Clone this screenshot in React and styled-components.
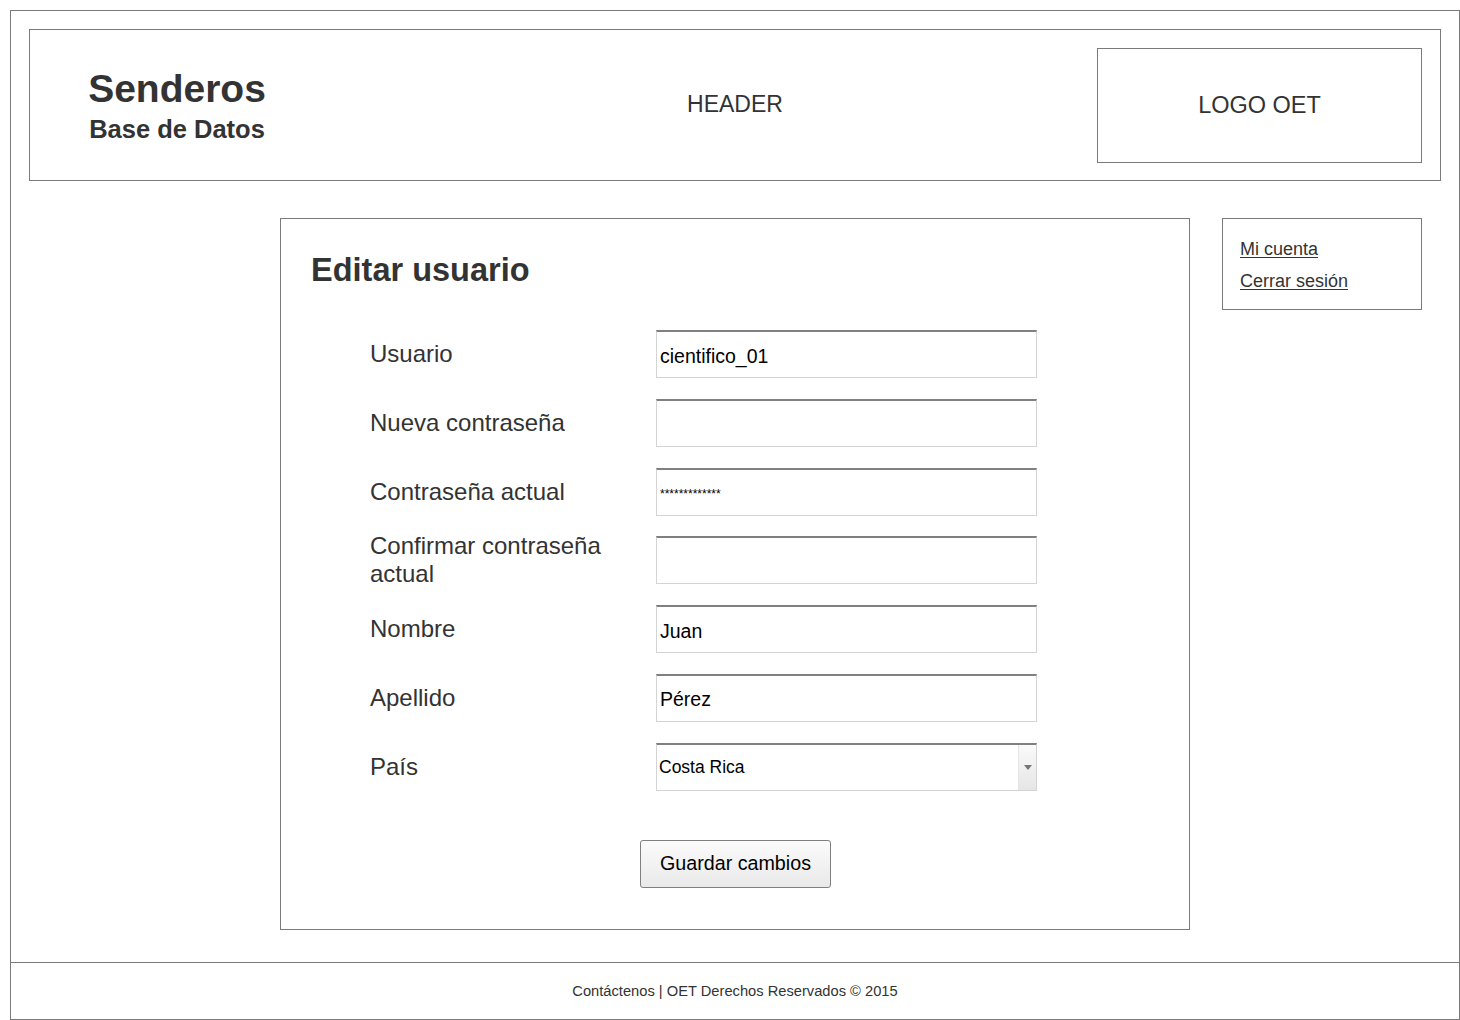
import React from "react";
import styled, { createGlobalStyle } from "styled-components";

const Global = createGlobalStyle`
  html, body { margin: 0; padding: 0; background: #fff; }
  body { font-family: "Liberation Sans", Arial, sans-serif; color: #333; }
  * { box-sizing: border-box; }
`;

const Frame = styled.div`
  margin: 10px 0 0 10px;
  width: 1450px;
  height: 1010px;
  border: 1px solid #7a7a7a;
  display: flex;
  flex-direction: column;
`;

const Header = styled.header`
  margin: 18px 18px 0 18px;
  height: 152px;
  border: 1px solid #7a7a7a;
  padding: 18px;
  display: grid;
  grid-template-columns: 325px 1fr 325px;
  align-items: center;
`;

const Brand = styled.div`
  width: 258px;
  text-align: center;
  color: #333;
  font-weight: bold;
  padding-top: 2px;
`;

const BrandTitle = styled.div`
  font-size: 39px;
  line-height: 42px;
`;

const BrandSub = styled.div`
  font-size: 25.5px;
  line-height: 32px;
  margin-top: 3px;
`;

const HeaderLabel = styled.div`
  text-align: center;
  font-size: 23px;
  color: #333;
  padding-bottom: 2px;
`;

const LogoBox = styled.div`
  height: 115px;
  border: 1px solid #7a7a7a;
  display: flex;
  align-items: center;
  justify-content: center;
  font-size: 23.5px;
  color: #333;
`;

const ContentRow = styled.div`
  margin-top: 37px;
  padding-right: 37px;
  display: flex;
  justify-content: flex-end;
  align-items: flex-start;
  gap: 32px;
`;

const MainPanel = styled.main`
  width: 910px;
  height: 712px;
  border: 1px solid #7a7a7a;
  padding: 33px 31px 0 30px;
  display: flex;
  flex-direction: column;
`;

const Title = styled.h1`
  margin: 0;
  font-size: 32.5px;
  line-height: 37px;
  font-weight: bold;
  color: #333;
`;

const Form = styled.form`
  margin-top: 41px;
  padding-left: 59px;
  display: grid;
  grid-template-columns: 286px 381px;
  grid-auto-rows: 48px;
  row-gap: 20.8px;
  align-items: center;
`;

const Label = styled.label`
  font-size: 24px;
  line-height: 28px;
  color: #333;
  padding-right: 30px;
`;

const Field = styled.div`
  height: 48px;
  border: 1px solid #d4d4d4;
  border-top: 2px solid #808080;
  display: flex;
  align-items: center;
  padding: 3px 0 0 3px;
  background: #fff;
  font-size: ${(p) => (p.$small ? "12px" : "19.5px")};
  color: #000;
  position: relative;
`;

const SelectField = styled(Field)`
  font-size: 17.5px;
  padding-left: 2px;
  padding-top: 1px;
`;

const SelectArrow = styled.div`
  position: absolute;
  right: 0;
  top: 0;
  bottom: 0;
  width: 18px;
  border-left: 1px solid #e4e4e4;
  background: linear-gradient(#fafafa, #e6e6e6);
  display: flex;
  align-items: center;
  justify-content: center;
`;

const ButtonRow = styled.div`
  display: flex;
  justify-content: center;
  margin-top: 49px;
`;

const Button = styled.button`
  width: 191px;
  height: 48px;
  border: 1px solid #7f7f7f;
  border-radius: 3px;
  background: linear-gradient(#fbfbfb, #e9e9e9);
  font-family: "Liberation Sans", Arial, sans-serif;
  font-size: 19.7px;
  color: #000;
  padding: 0;
  margin-left: 2px;
`;

const Sidebar = styled.aside`
  width: 200px;
  height: 92px;
  border: 1px solid #7a7a7a;
  padding: 18px 17px;
  display: flex;
  flex-direction: column;
  gap: 8px;
`;

const SideLink = styled.a`
  font-size: 18px;
  line-height: 24px;
  color: #333;
  text-decoration: underline;
  text-underline-offset: 2px;
`;

const Footer = styled.footer`
  margin-top: auto;
  height: 57px;
  border-top: 1px solid #7a7a7a;
  display: flex;
  align-items: center;
  justify-content: center;
  font-size: 14.7px;
  color: #333;
  padding-bottom: 1px;
`;

const rows = [
  { label: "Usuario", value: "cientifico_01" },
  { label: "Nueva contraseña", value: "" },
  { label: "Contraseña actual", value: "*************", small: true },
  { label: "Confirmar contraseña actual", value: "" },
  { label: "Nombre", value: "Juan" },
  { label: "Apellido", value: "Pérez" },
];

export default function App() {
  return (
    <>
      <Global />
      <Frame>
        <Header>
          <Brand>
            <BrandTitle>Senderos</BrandTitle>
            <BrandSub>Base de Datos</BrandSub>
          </Brand>
          <HeaderLabel>HEADER</HeaderLabel>
          <LogoBox>LOGO OET</LogoBox>
        </Header>
        <ContentRow>
          <MainPanel>
            <Title>Editar usuario</Title>
            <Form onSubmit={(e) => e.preventDefault()}>
              {rows.map((r) => (
                <React.Fragment key={r.label}>
                  <Label>{r.label}</Label>
                  <Field $small={r.small}>{r.value}</Field>
                </React.Fragment>
              ))}
              <Label>País</Label>
              <SelectField>
                Costa Rica
                <SelectArrow>
                  <svg width="8" height="5" viewBox="0 0 8 5">
                    <path d="M0 0 L8 0 L4 5 Z" fill="#777" />
                  </svg>
                </SelectArrow>
              </SelectField>
            </Form>
            <ButtonRow>
              <Button type="button">Guardar cambios</Button>
            </ButtonRow>
          </MainPanel>
          <Sidebar>
            <SideLink href="#">Mi cuenta</SideLink>
            <SideLink href="#">Cerrar sesión</SideLink>
          </Sidebar>
        </ContentRow>
        <Footer>Contáctenos | OET Derechos Reservados © 2015</Footer>
      </Frame>
    </>
  );
}
